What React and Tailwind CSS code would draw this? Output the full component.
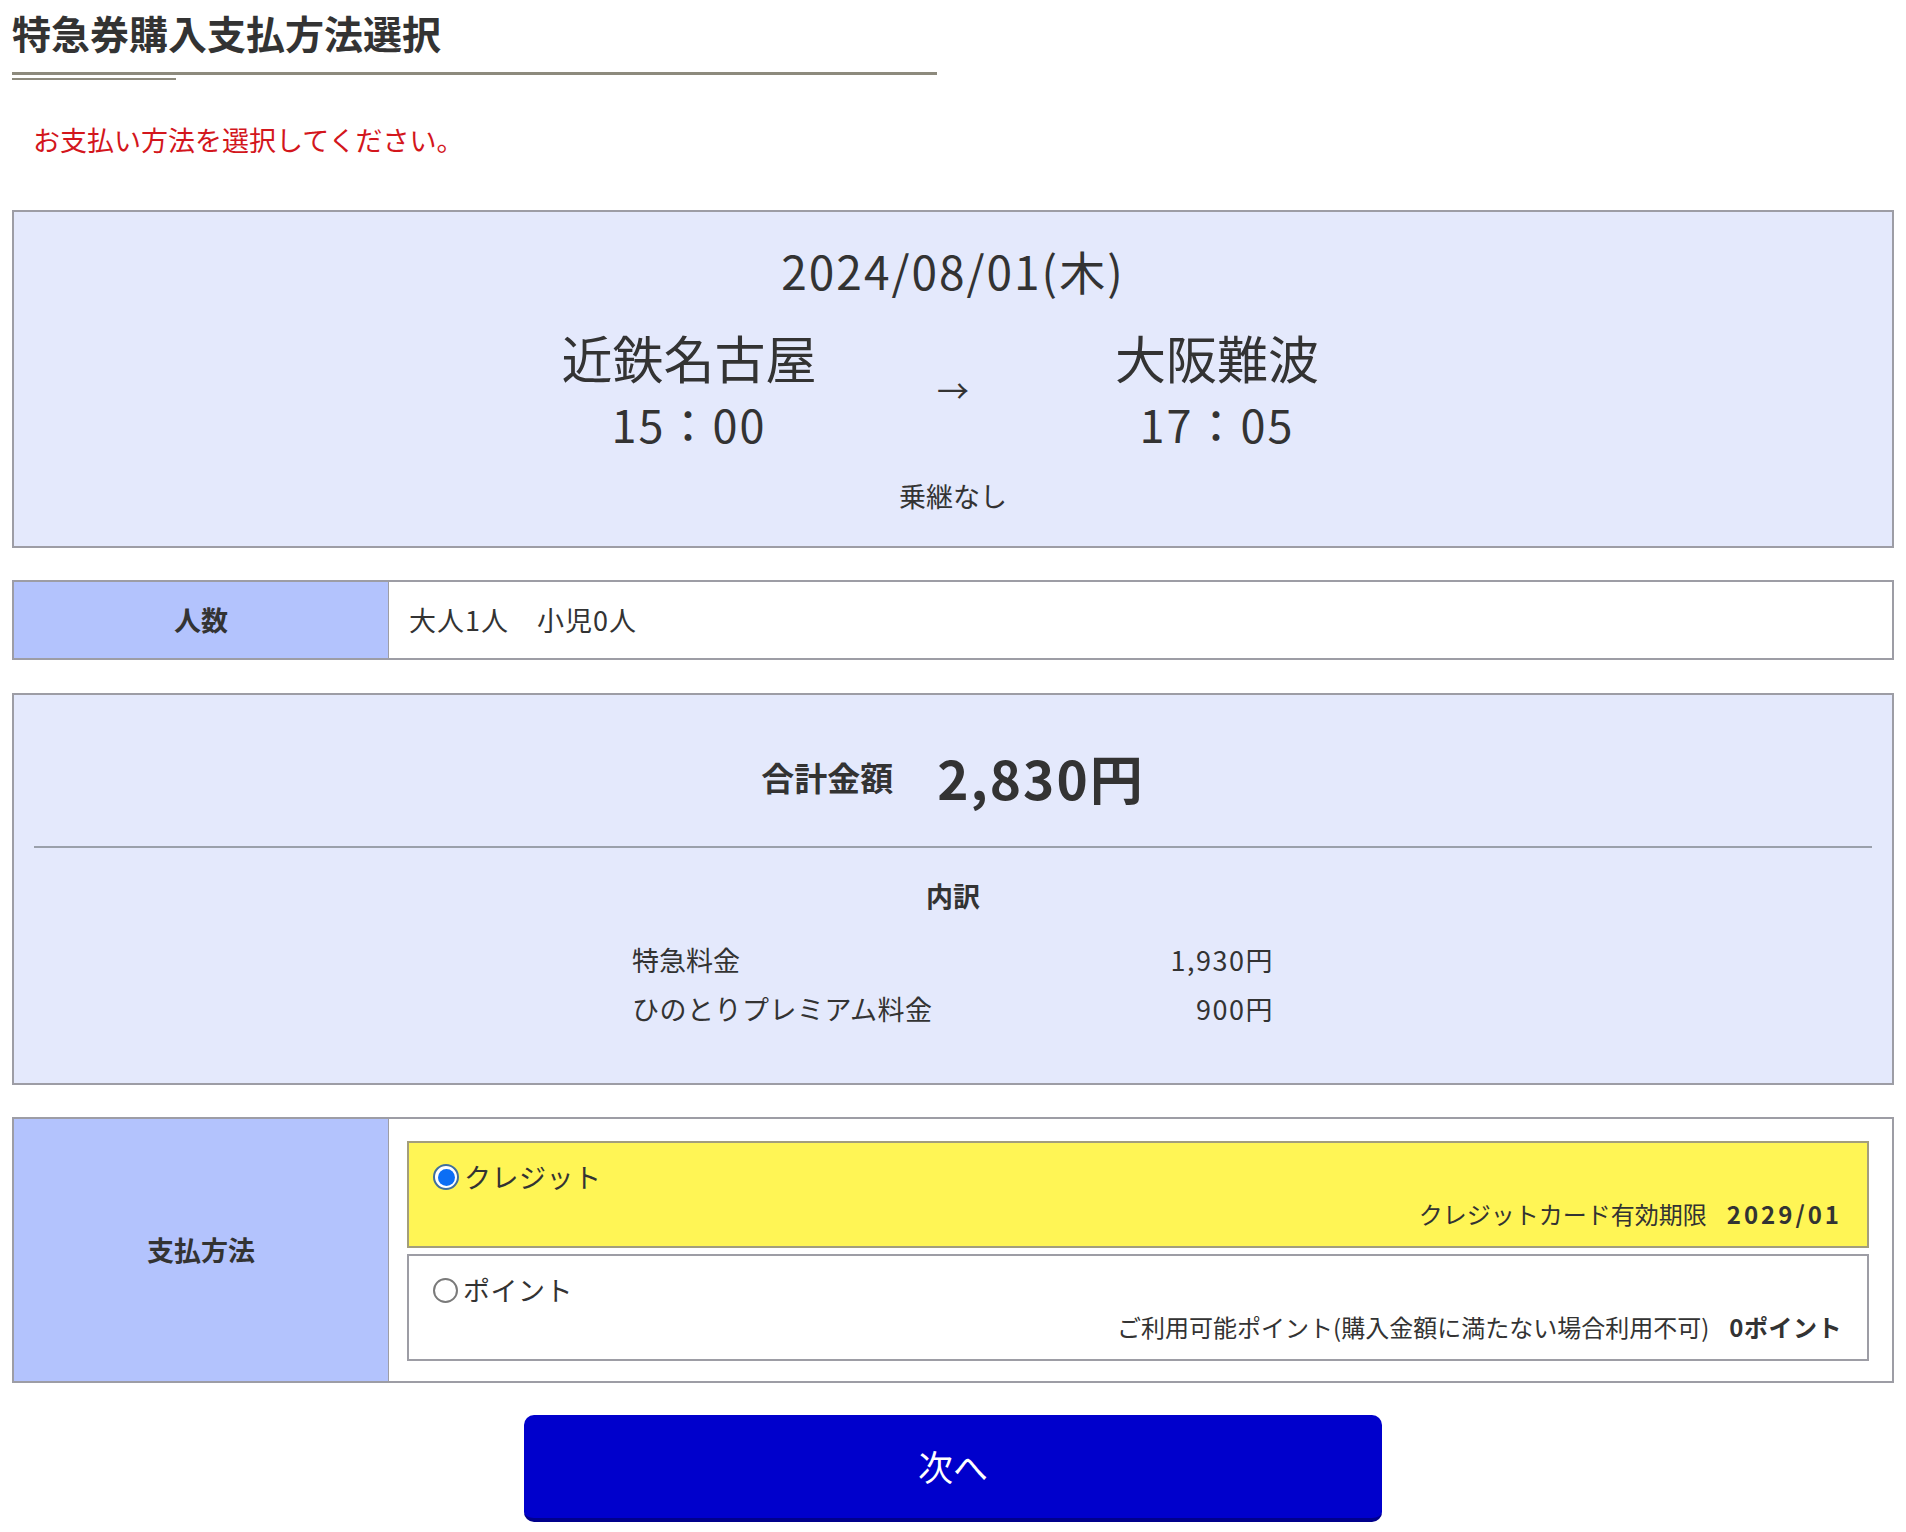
import React, { useState } from 'react';

const PAYMENTS = [
  { id: 'credit', label: 'クレジット', note: 'クレジットカード有効期限', value: '2029/01', track: 'tracking-[3px]' },
  { id: 'point', label: 'ポイント', note: 'ご利用可能ポイント(購入金額に満たない場合利用不可)', value: '0ポイント', track: 'tracking-[0.5px]' },
];

const Radio = ({ checked }) =>
  checked ? (
    <span className="w-[26px] h-[26px] rounded-full border-[2px] border-[#3f6f9f] bg-white flex items-center justify-center flex-shrink-0">
      <span className="w-[17px] h-[17px] rounded-full bg-[#0b6ef5]" />
    </span>
  ) : (
    <span className="w-[25px] h-[25px] rounded-full border-[2px] border-[#7a7a7a] bg-white flex-shrink-0" />
  );

export default function App() {
  const [method, setMethod] = useState('credit');

  return (
    <div className="w-[1906px] min-h-[1532px] bg-white px-[12px] pb-[11px] text-[#333] font-['Noto_Sans_CJK_JP','Noto_Sans',sans-serif]">
      {/* Heading */}
      <h1 className="pt-[9px] text-[39px] leading-[47px] font-bold">特急券購入支払方法選択</h1>
      <div className="mt-[16px] h-[3px] w-[925px] bg-[#8d8a7d]" />
      <div className="mt-[3px] h-[2px] w-[164px] bg-[#8d8a7d]" />

      <p className="mt-[40px] pl-[21px] text-[27px] leading-[40px] text-[#d3161c]">お支払い方法を選択してください。</p>

      {/* Journey */}
      <div className="mt-[50px] border-[2px] border-[#9d9da5] bg-[#e4e9fc] pt-[30px] pb-[32px] flex flex-col items-center">
        <div className="text-[46px] leading-[56px] tracking-[2px]">2024/08/01(木)</div>
        <div className="mt-[29px] flex justify-center">
          <div className="w-[400px] flex flex-col items-center">
            <div className="text-[51px] leading-[60px]">近鉄名古屋</div>
            <div className="mt-[11px] text-[45px] leading-[52px] tracking-[2px]">15：00</div>
          </div>
          <div className="w-[128px] flex items-center justify-center text-[32px]">→</div>
          <div className="w-[400px] flex flex-col items-center">
            <div className="text-[51px] leading-[60px]">大阪難波</div>
            <div className="mt-[11px] text-[45px] leading-[52px] tracking-[2px]">17：05</div>
          </div>
        </div>
        <div className="mt-[28px] text-[27px] leading-[36px]">乗継なし</div>
      </div>

      {/* People */}
      <div className="mt-[32px] h-[80px] border-[2px] border-[#9d9da5] flex">
        <div className="w-[375px] bg-[#b3c3fd] border-r border-[#9d9da5] flex items-center justify-center text-[27px] font-bold">人数</div>
        <div className="flex-1 flex items-center pl-[20px] text-[27px] tracking-[1px]">大人1人　小児0人</div>
      </div>

      {/* Total */}
      <div className="mt-[33px] border-[2px] border-[#9d9da5] bg-[#e4e9fc] pb-[50px]">
        <div className="pt-[52px] pb-[39px] flex items-center justify-center gap-[44px]">
          <span className="text-[33px] leading-[44px] font-bold">合計金額</span>
          <span className="text-[53px] leading-[60px] font-bold tracking-[2px]">2,830円</span>
        </div>
        <div className="mx-[20px] h-[2px] bg-[#9aa0ab]" />
        <div className="mt-[30px] text-center text-[27px] leading-[36px] font-bold">内訳</div>
        <div className="mt-[21px] w-[642px] mx-auto text-[27px] leading-[49px]">
          <div className="flex justify-between">
            <span>特急料金</span>
            <span className="tracking-[1.5px]">1,930円</span>
          </div>
          <div className="flex justify-between">
            <span className="tracking-[0.5px]">ひのとりプレミアム料金</span>
            <span className="tracking-[1.5px]">900円</span>
          </div>
        </div>
      </div>

      {/* Payment method */}
      <div className="mt-[32px] border-[2px] border-[#9d9da5] flex">
        <div className="w-[375px] bg-[#b3c3fd] border-r border-[#9d9da5] flex items-center justify-center text-[27px] font-bold">支払方法</div>
        <div className="flex-1 pt-[22px] pb-[20px] pl-[18px] pr-[23px] flex flex-col gap-[6px]">
          {PAYMENTS.map((p) => {
            const checked = method === p.id;
            return (
              <button
                key={p.id}
                onClick={() => setMethod(p.id)}
                className={`text-left border-[2px] pt-[16px] pb-[16px] pl-[24px] pr-[25px] ${checked ? 'bg-[#fff555] border-[#a39e7c]' : 'bg-white border-[#9d9da5]'}`}
              >
                <div className="flex items-center gap-[5px] text-[27px] leading-[36px]">
                  <Radio checked={checked} />
                  <span className="tracking-[0.5px]">{p.label}</span>
                </div>
                <div className="mt-[3px] flex justify-end items-baseline gap-[20px] text-[24px] leading-[32px]">
                  <span>{p.note}</span>
                  <span className={`font-bold ${p.track}`}>{p.value}</span>
                </div>
              </button>
            );
          })}
        </div>
      </div>

      {/* Next */}
      <div className="mt-[32px] flex justify-center">
        <button className="w-[858px] h-[107px] rounded-[10px] bg-[#0000cc] border-b-[4px] border-[#00008c] text-white text-[35px]">次へ</button>
      </div>
    </div>
  );
}
